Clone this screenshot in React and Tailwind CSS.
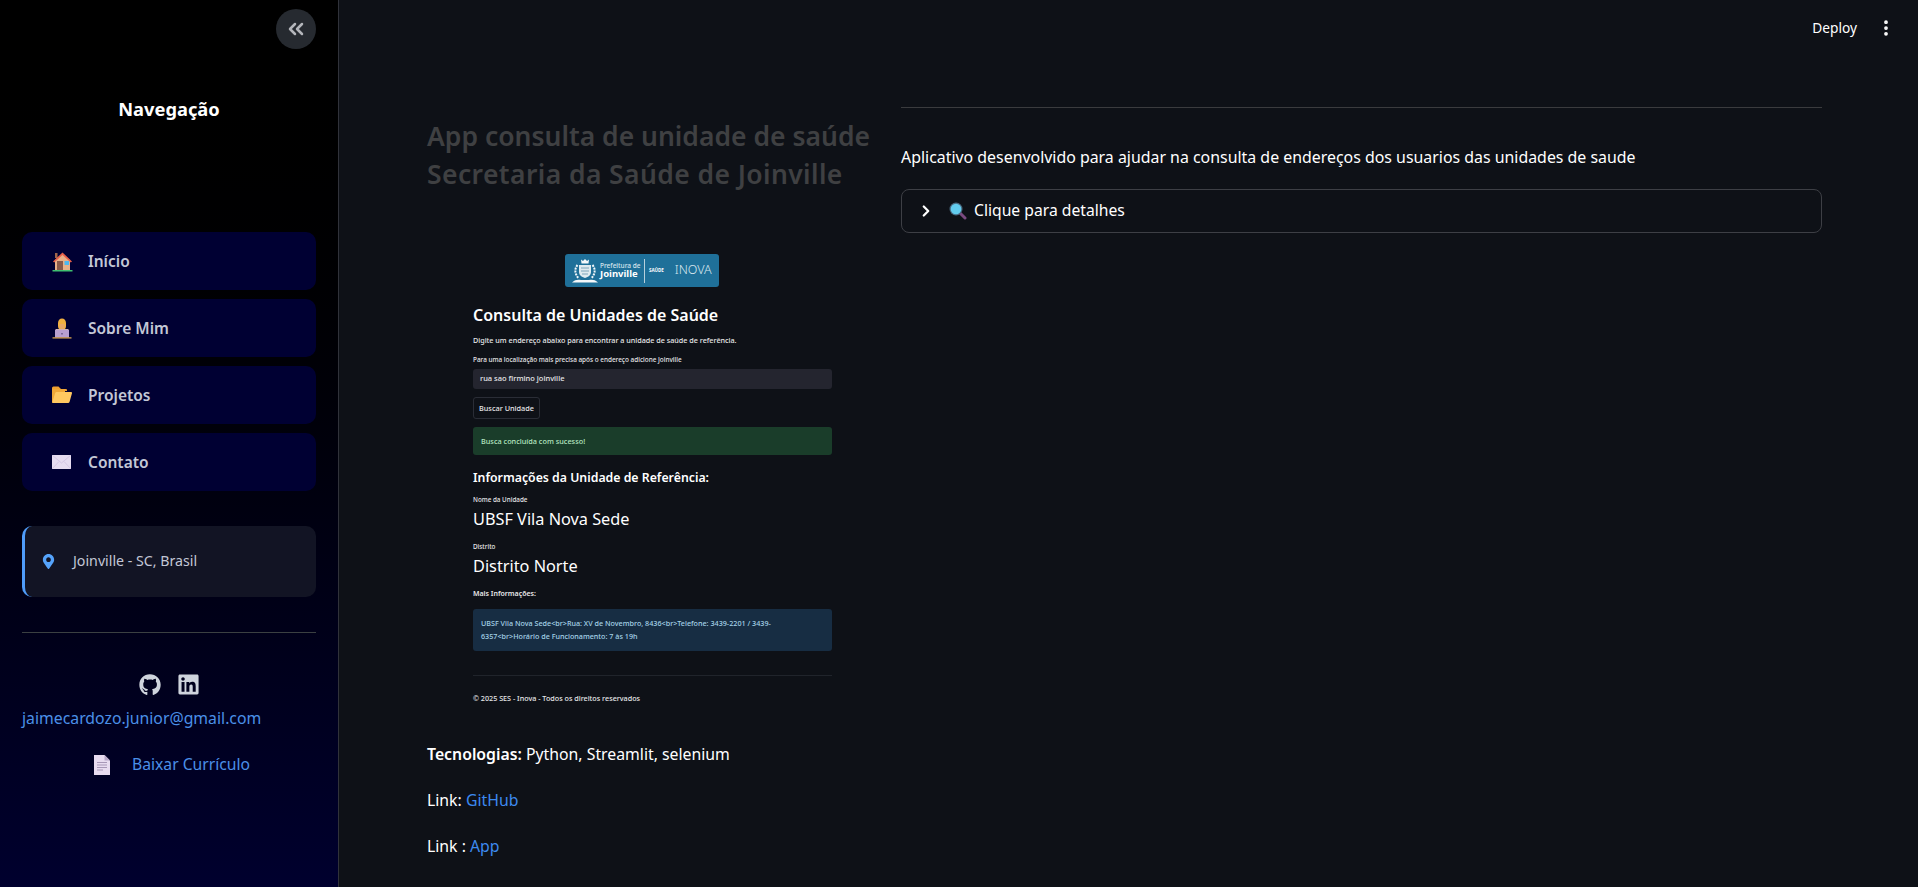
import { ChevronsLeft, ChevronRight, EllipsisVertical } from 'lucide-react';
import { FaGithub, FaLinkedin, FaMapMarkerAlt } from 'react-icons/fa';

function HouseEmoji() {
  return (
    <svg width="21" height="21" viewBox="0 0 21 21">
      <rect x="3" y="2" width="2.5" height="5" fill="#a0654a" />
      <path d="M3 9 10.500 2.500 18 9v10H3z" fill="#e8b088" />
      <path d="M1 10.500 10.500 1.500 20 10.500 18.800 11.500 10.500 4 2.200 11.500z" fill="#e8604a" />
      <rect x="5" y="10" width="6" height="9" fill="#8a5a4a" />
      <rect x="12.500" y="10" width="4.500" height="4" fill="#4fb8f0" />
      <rect x="0.500" y="19" width="20" height="1.500" fill="#3fc070" />
    </svg>
  );
}

function TechEmoji() {
  return (
    <svg width="20" height="21" viewBox="0 0 20 21">
      <path d="M6 5a4 4.500 0 0 1 8 0v3a4 4 0 0 1-8 0z" fill="#f0b040" />
      <path d="M7.500 6h5v2.500a2.500 2.500 0 0 1-5 0z" fill="#e8a868" />
      <path d="M4 11h12l1 3H3z" fill="#e8c098" />
      <rect x="3" y="11.500" width="14" height="8" rx="0.500" fill="#b8a0d0" />
      <rect x="9" y="15" width="2" height="1.500" fill="#7c6a98" />
      <rect x="0.500" y="19.300" width="19" height="1.200" fill="#e8b050" />
    </svg>
  );
}

function FolderEmoji() {
  return (
    <svg width="20" height="18" viewBox="0 0 20 18">
      <path d="M0 2a1.500 1.500 0 0 1 1.500-1.500h5L9 3h5a1 1 0 0 1 1 1v1H0z" fill="#f0a030" />
      <path d="M0 3h13v14H1a1 1 0 0 1-1-1z" fill="#f0a838" />
      <path d="M4.500 6H19a1 1 0 0 1 1 1.200L17.500 16a1.500 1.500 0 0 1-1.500 1H1.500c-1 0-1.300-.5-1-1.500L3.200 7A1.500 1.500 0 0 1 4.500 6z" fill="#ffc860" />
    </svg>
  );
}

function EnvelopeEmoji() {
  return (
    <svg width="19" height="14" viewBox="0 0 19 14">
      <rect width="19" height="14" fill="#e6dcf0" />
      <path d="M0 0 9.500 8 19 0M0 14 7 6.500M19 14l-7-7.500" stroke="#cdbfdf" strokeWidth="0.700" fill="none" />
    </svg>
  );
}

function PageEmoji() {
  return (
    <svg width="16" height="20" viewBox="0 0 16 20">
      <path d="M0 0h10.500L16 5.500V20H0z" fill="#e8dcf0" />
      <path d="M10.500 0 16 5.500h-5.500z" fill="#b8a8c8" />
      <path d="M3 7.500h10M3 10h10M3 12.500h10M3 15h6" stroke="#a898b8" strokeWidth="1" />
    </svg>
  );
}

function SearchEmoji() {
  return (
    <svg width="18" height="18" viewBox="0 0 18 18">
      <path d="M10.500 10.500 16 16" stroke="#7a4a80" strokeWidth="3" strokeLinecap="round" />
      <circle cx="7" cy="7" r="6.500" fill="#4a6a80" />
      <circle cx="7" cy="7" r="5.300" fill="#62ccee" />
    </svg>
  );
}

// brasao da prefeitura, simplificado
function Crest() {
  return (
    <svg width="26" height="25" viewBox="0 0 26 25">
      <path d="M9 1.500l2 1.500 2-2 2 2 2-1.500-.5 4h-7z" fill="#f4f8fa" />
      <path d="M7 7h12v7c0 3-2.500 5-6 6-3.500-1-6-3-6-6z" fill="#dfeaef" />
      <path d="M9 10h8M9 13h8M10 16h6" stroke="#7fa6ba" strokeWidth="1" />
      <path d="M5.500 7C2 11 3 17 7 20.500M20.500 7c3.500 4 2.500 10-1.500 13.500" stroke="#f4f8fa" strokeWidth="2" strokeDasharray="2 1" fill="none" />
      <path d="M0 24.500c3-3 6-3 9-2.500h8c3-.5 6-.5 9 2.500z" fill="#f4f8fa" />
    </svg>
  );
}

const navItems = [
  { label: 'Início', icon: <HouseEmoji /> },
  { label: 'Sobre Mim', icon: <TechEmoji /> },
  { label: 'Projetos', icon: <FolderEmoji /> },
  { label: 'Contato', icon: <EnvelopeEmoji /> },
];

function Sidebar() {
  return (
    <aside className="w-[339px] h-full shrink-0 border-r border-[#30323a] bg-gradient-to-b from-[#000000] to-[#00002e] px-[22px]">
      <div className="flex justify-end pt-[9px]">
        <button className="w-10 h-10 rounded-full bg-[#262a30] flex items-center justify-center text-[#b4b6bb]">
          <ChevronsLeft size={24} strokeWidth={2.5} />
        </button>
      </div>
      <h2 className="mt-[45px] text-center text-[18.300px] leading-[30px] font-bold text-white">Navegação</h2>

      <nav className="mt-[108px] flex flex-col gap-[9px]">
        {navItems.map((item) => (
          <a key={item.label} className="h-[58px] rounded-[10px] bg-[#000033] flex items-center text-[#c3c7d6] text-[15.500px] font-semibold">
            <span className="w-[66px] pl-[30px] flex justify-start shrink-0">{item.icon}</span>
            <span className="pt-[2px]">{item.label}</span>
          </a>
        ))}
      </nav>

      <div className="mt-[35px] h-[71px] rounded-[10px] border-l-[3px] border-[#4f9cf9] bg-[#121424] flex items-center text-[#c3c7d6] text-[14.200px]">
        <FaMapMarkerAlt className="ml-[16px] text-[#55a3fb]" size={15} />
        <span className="ml-[17px] pb-[2px]">Joinville - SC, Brasil</span>
      </div>

      <div className="mt-[35px] h-px bg-[#3b4042]" />

      <div className="mt-[40px] flex justify-center items-center gap-[16px] text-[#cfd4dd]">
        <FaGithub size={22} />
        <FaLinkedin size={23} />
      </div>
      <a className="block mt-[9px] text-[15.800px] leading-[26px] text-[#4b90e8]">jaimecardozo.junior@gmail.com</a>
      <div className="mt-[22px] flex items-center h-[24px] pl-[72px]">
        <PageEmoji />
        <a className="ml-[22px] text-[15.700px] text-[#4b90e8]">Baixar Currículo</a>
      </div>
    </aside>
  );
}

function EmbeddedShot() {
  return (
    <div className="mt-[61px] ml-[46px] w-[359px] text-[#e8e8ea] font-medium">
      <div className="ml-[92px] w-[154px] h-[33px] rounded-[3px] bg-[#1f7099] flex items-center pl-[7px] text-white">
        <Crest />
        <div className="ml-[2px] w-[40px] leading-none">
          <p className="text-[6.500px] text-[#d8e6ee] whitespace-nowrap">Prefeitura de</p>
          <p className="text-[9.500px] font-bold whitespace-nowrap">Joinville</p>
        </div>
        <div className="ml-[4px] w-px h-[24px] bg-[#b8d0dc]" />
        <span className="ml-[4px] text-[4.500px] font-bold">SAÚDE</span>
        <span className="ml-[11px] text-[12.500px] font-light text-[#d8e6ee]">INOVA</span>
      </div>
      <h3 className="mt-[15px] text-[16px] leading-[26px] font-semibold text-white">Consulta de Unidades de Saúde</h3>
      <p className="mt-[5px] text-[7.200px] leading-[14px] whitespace-nowrap">Digite um endereço abaixo para encontrar a unidade de saúde de referência.</p>
      <p className="mt-[7px] text-[6.400px] leading-[12px] whitespace-nowrap">Para uma localização mais precisa após o endereço adicione Joinville</p>
      <div className="mt-[3px] h-[20px] rounded-[3px] bg-[#24252f] flex items-center pl-[7px] text-[7.500px]">rua sao firmino joinville</div>
      <button className="mt-[8px] block h-[22px] w-[67px] rounded-[3px] border border-[#2a2d36] text-[7.300px] whitespace-nowrap">Buscar Unidade</button>
      <div className="mt-[8px] h-[28px] rounded-[3px] bg-[#1a3d2a] flex items-center pl-[8px] text-[7.300px] text-[#b5e6c0]">Busca concluída com sucesso!</div>
      <h4 className="mt-[14px] text-[12.300px] leading-[18px] font-semibold text-white">Informações da Unidade de Referência:</h4>
      <p className="mt-[8px] text-[6.300px] leading-[10px]">Nome da Unidade</p>
      <p className="mt-[1px] text-[16.300px] leading-[26px] font-normal text-white">UBSF Vila Nova Sede</p>
      <p className="mt-[10px] text-[6.300px] leading-[10px]">Distrito</p>
      <p className="mt-[1px] text-[16.300px] leading-[26px] font-normal text-white">Distrito Norte</p>
      <p className="mt-[9px] text-[7px] leading-[12px] font-semibold">Mais Informações:</p>
      <div className="mt-[9px] h-[42px] rounded-[3px] bg-[#172d43] pl-[8px] pr-[56px] pt-[8px] text-[7.200px] leading-[13px] text-[#a5d3e8]">
        UBSF Vila Nova Sede&lt;br&gt;Rua: XV de Novembro, 8436&lt;br&gt;Telefone: 3439-2201 / 3439-6357&lt;br&gt;Horário de Funcionamento: 7 às 19h
      </div>
      <div className="mt-[24px] h-px bg-[#20242b]" />
      <p className="mt-[16px] text-[7.200px] leading-[12px]">© 2025 SES - Inova - Todos os direitos reservados</p>
    </div>
  );
}

function ProjectColumn() {
  return (
    <div className="w-[444px] shrink-0">
      <h1 className="mt-[5px] text-[26.500px] leading-[38px] font-semibold text-[#3f4042] whitespace-nowrap">
        App consulta de unidade de saúde<br />
        <span className="tracking-[0.4px]">Secretaria da Saúde de Joinville</span>
      </h1>
      <EmbeddedShot />
      <p className="mt-[37px] text-[15.800px] leading-[26px] text-white"><strong className="font-semibold">Tecnologias:</strong> Python, Streamlit, selenium</p>
      <p className="mt-[20px] text-[15.800px] leading-[26px] text-white">Link: <a className="text-[#3d8af0]">GitHub</a></p>
      <p className="mt-[20px] text-[15.800px] leading-[26px] text-white">Link : <a className="text-[#3d8af0]">App</a></p>
    </div>
  );
}

function DetailColumn() {
  return (
    <div className="flex-1 min-w-0">
      <div className="mt-[-5px] h-px bg-[#3a3b3e]" />
      <p className="mt-[36px] text-[15.900px] leading-[26px] text-white">Aplicativo desenvolvido para ajudar na consulta de endereços dos usuarios das unidades de saude</p>
      <div className="mt-[19px] h-[44px] rounded-[8px] border border-[#3d3f45] flex items-center text-white text-[15.700px]">
        <ChevronRight className="ml-[15px]" size={18} strokeWidth={3} />
        <span className="ml-[14px] flex"><SearchEmoji /></span>
        <span className="ml-[7px]">Clique para detalhes</span>
      </div>
    </div>
  );
}

export default function App() {
  return (
    <div className="w-[1918px] h-[887px] overflow-hidden flex bg-[#0e1117] font-['Noto_Sans',sans-serif]">
      <Sidebar />
      <main className="flex-1 min-w-0">
        <header className="h-[56px] flex items-center justify-end text-white">
          <span className="text-[13.700px]">Deploy</span>
          <EllipsisVertical className="ml-[19px] mr-[22px]" size={20} strokeWidth={2.5} />
        </header>
        <div className="pl-[88px] pr-[96px] pt-[56px] flex gap-[30px]">
          <ProjectColumn />
          <DetailColumn />
        </div>
      </main>
    </div>
  );
}
